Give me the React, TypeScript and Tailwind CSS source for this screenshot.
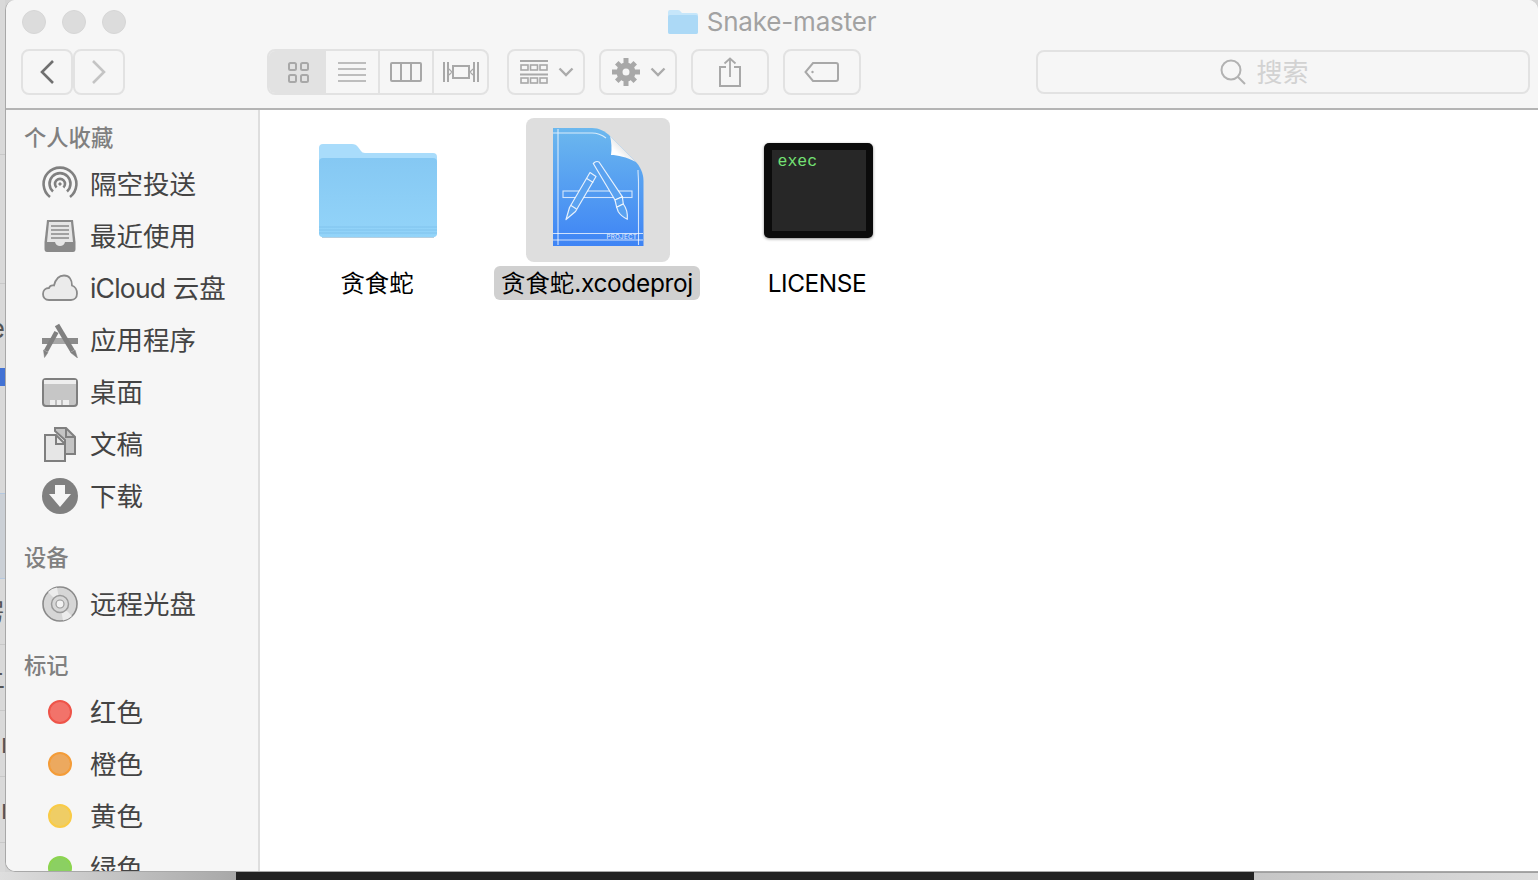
const FONT = "font-['Inter','Noto_Sans_CJK_SC',sans-serif]";

function AirdropIcon() {
  return (
    <svg width="36" height="36" viewBox="0 0 36 36" fill="none" stroke="#808080" strokeWidth="2.6">
      <path d="M8 31 A16.4 16.4 0 1 1 28 31" />
      <path d="M11 25.5 A10.5 10.5 0 1 1 25 25.5" />
      <path d="M14.6 21.5 A5 5 0 1 1 21.4 21.5" />
      <circle cx="18" cy="18" r="1.2" fill="#808080" strokeWidth="1" />
    </svg>
  );
}

function RecentIcon() {
  return (
    <svg width="36" height="36" viewBox="0 0 36 36">
      <path d="M5 2 H31 L33.5 24 V31 Q33.5 34 31 34 H5 Q2.5 34 2.5 31 V24 Z" fill="#8a8a8a" />
      <path d="M7 4 H29 L31 24 H23 Q22 28 18 28 Q14 28 13 24 H5 Z" fill="#e6e6e6" />
      <path d="M9 8 H27 M9 12 H27 M9 16 H27 M9 20 H27" stroke="#8a8a8a" strokeWidth="1.5" />
    </svg>
  );
}

function CloudIcon() {
  return (
    <svg width="36" height="36" viewBox="0 0 36 36">
      <path
        d="M7 30 C3 30 1 27 1 24 C1 20.5 3.5 18 7 18 C8 15.5 10 15 12 15.5 C13.5 9.5 17 5.5 22 5.5 C27.5 5.5 30 10 30 15.5 C33 16.5 35 20 35 23.5 C35 27.5 32.5 30 29 30 Z"
        fill="#ebebeb"
        stroke="#8a8a8a"
        strokeWidth="1.8"
      />
    </svg>
  );
}

function AppsIcon() {
  return (
    <svg width="36" height="36" viewBox="0 0 36 36" fill="none" stroke="#808080">
      <path d="M0 16 H36 V22 H0 Z" fill="#8a8a8a" stroke="none" />
      <path d="M11 16 H25 L27 22 H9 Z" fill="#a8a8a8" stroke="none" />
      <path d="M14.5 10 L4 29" strokeWidth="4.6" />
      <path d="M15 3 L30.5 29" strokeWidth="5" />
      <path d="M1.5 28 L6 30.5 L2.5 35.5 Z" fill="#808080" strokeWidth="0.5" />
      <path d="M28.5 30.5 L33 28 L35.5 36 Z" fill="#808080" strokeWidth="0.5" />
    </svg>
  );
}

function DesktopIcon() {
  return (
    <svg width="36" height="36" viewBox="0 0 36 36">
      <rect x="1" y="5" width="34" height="27" rx="3" fill="#c6c6c6" stroke="#7f7f7f" strokeWidth="2" />
      <rect x="2" y="6" width="32" height="4" fill="#eeeeee" />
      <rect x="8" y="26" width="19" height="5" fill="#eeeeee" />
      <path d="M14 26 V31 M20 26 V31" stroke="#aaaaaa" strokeWidth="1.4" />
    </svg>
  );
}

function DocsIcon() {
  return (
    <svg width="36" height="36" viewBox="0 0 36 36" fill="#e6e6e6" stroke="#7f7f7f" strokeWidth="2">
      <path d="M13 2 H24 L33 11 V28 H23 V14 L13 5 Z" fill="#c4c4c4" />
      <path d="M24 2 V11 H33" fill="none" />
      <path d="M3 9 H14 L23 18 V35 H3 Z" />
      <path d="M14 9 V18 H23" fill="none" />
    </svg>
  );
}

function DownloadIcon() {
  return (
    <svg width="36" height="36" viewBox="0 0 36 36">
      <circle cx="18" cy="18" r="18" fill="#808080" />
      <path d="M13 7 H23 V16 H29 L18 29 L7 16 H13 Z" fill="#f6f6f6" />
    </svg>
  );
}

function DiscIcon() {
  return (
    <svg width="36" height="36" viewBox="0 0 36 36">
      <circle cx="18" cy="18" r="17" fill="#d6d6d6" stroke="#8a8a8a" strokeWidth="1.6" />
      <path d="M18 18 L6 6 A17 17 0 0 1 15 1.5 Z M18 18 L30 30 A17 17 0 0 1 21 34.5 Z" fill="#ececec" />
      <circle cx="18" cy="18" r="8.5" fill="#d8d8d8" stroke="#9a9a9a" strokeWidth="1.5" />
      <circle cx="18" cy="18" r="4" fill="#f2f2f2" stroke="#9a9a9a" strokeWidth="1.2" />
    </svg>
  );
}

function TagDot({ fill, ring }: { fill: string; ring: string }) {
  return (
    <div className={`h-6 w-6 rounded-full border-2 ${fill} ${ring}`} />
  );
}

function BackgroundStrip() {
  return (
    <div className={`${FONT} flex h-full w-[5px] shrink-0 flex-col overflow-hidden bg-[#d9d9d9] text-[26px] leading-none text-[#555]`}>
      <div className="h-[155px] shrink-0 border-b border-[#c8c8c8]" />
      <div className="h-[129px] shrink-0 border-b border-[#c8c8c8]" />
      <div className="flex h-[84px] shrink-0 items-end justify-end overflow-hidden pb-[26px]">
        <span className="shrink-0">e</span>
      </div>
      <div className="h-[18px] shrink-0 bg-[#4272d4]" />
      <div className="h-[108px] shrink-0 border-b border-[#b4c8e0]" />
      <div className="h-[85px] shrink-0 border-b border-[#b4c8e0] bg-[#cbd0d6]" />
      <div className="flex h-[66px] shrink-0 items-center justify-end overflow-hidden border-b border-[#c8c8c8]">
        <span className="shrink-0">房</span>
      </div>
      <div className="flex h-[66px] shrink-0 items-center justify-end overflow-hidden border-b border-[#c8c8c8]">
        <span className="shrink-0">上</span>
      </div>
      <div className="flex h-[66px] shrink-0 items-center overflow-hidden border-b border-[#c8c8c8]">
        <span className="shrink-0 pl-[1px]">r</span>
      </div>
      <div className="flex h-[66px] shrink-0 items-center overflow-hidden border-b border-[#c8c8c8]">
        <span className="shrink-0 pl-[1px]">r</span>
      </div>
    </div>
  );
}

function ToolButton({ children, className }: { children: React.ReactNode; className: string }) {
  return (
    <div className={`flex h-[46px] w-[78px] shrink-0 items-center justify-center rounded-lg border-2 border-[#e2e2e2] ${className}`}>
      {children}
    </div>
  );
}

function Chevron() {
  return (
    <svg width="16" height="10" viewBox="0 0 16 10" fill="none" stroke="#ababab" strokeWidth="2.4">
      <path d="M1.5 1.5 L8 8 L14.5 1.5" />
    </svg>
  );
}

function Toolbar() {
  return (
    <div className="flex h-[46px] items-start pl-[15px]">
      <div className="flex">
        <div className="flex h-[46px] w-[52px] items-center justify-center rounded-lg border-2 border-[#e2e2e2]">
          <svg width="16" height="26" viewBox="0 0 16 26" fill="none" stroke="#707070" strokeWidth="2.6">
            <path d="M14 2 L3 13 L14 24" />
          </svg>
        </div>
        <div className="flex h-[46px] w-[52px] items-center justify-center rounded-lg border-2 border-[#e2e2e2]">
          <svg width="16" height="26" viewBox="0 0 16 26" fill="none" stroke="#c4c4c4" strokeWidth="2.6">
            <path d="M2 2 L13 13 L2 24" />
          </svg>
        </div>
      </div>

      <div className="ml-[142px] flex h-[46px] w-[222px] overflow-hidden rounded-lg border-2 border-[#e2e2e2]">
        <div className="flex w-[57px] items-center justify-center border-r-2 border-[#e2e2e2] bg-[#e2e2e2] pl-[3px]">
          <svg width="21" height="21" viewBox="0 0 21 21" fill="none" stroke="#a8a8a8" strokeWidth="2">
            <rect x="1" y="1" width="7" height="7" rx="1.5" />
            <rect x="13" y="1" width="7" height="7" rx="1.5" />
            <rect x="1" y="13" width="7" height="7" rx="1.5" />
            <rect x="13" y="13" width="7" height="7" rx="1.5" />
          </svg>
        </div>
        <div className="flex w-[54px] items-center justify-center border-r-2 border-[#e2e2e2]">
          <svg width="28" height="20" viewBox="0 0 28 20" stroke="#ababab" strokeWidth="1.6">
            <path d="M0 1 H28 M0 7 H28 M0 13 H28 M0 19 H28" />
          </svg>
        </div>
        <div className="flex w-[54px] items-center justify-center border-r-2 border-[#e2e2e2]">
          <svg width="32" height="20" viewBox="0 0 32 20" fill="none" stroke="#a8a8a8" strokeWidth="2">
            <rect x="1" y="1" width="30" height="18" rx="1" />
            <path d="M11 1 V19 M21 1 V19" />
          </svg>
        </div>
        <div className="flex flex-1 items-center justify-center">
          <svg width="36" height="20" viewBox="0 0 36 20" fill="none" stroke="#a8a8a8" strokeWidth="2">
            <path d="M1 0 V20 M5 0 V20 M31 0 V20 M35 0 V20" />
            <rect x="10" y="4" width="16" height="12" />
            <path d="M6 7 L9 10 L6 13 M30 7 L27 10 L30 13" strokeWidth="1.2" />
          </svg>
        </div>
      </div>

      <ToolButton className="ml-[18px] gap-[10px] pl-[1px]">
        <svg width="28" height="24" viewBox="0 0 28 24" fill="none" stroke="#a8a8a8">
          <path d="M0 1 H28 M0 14.5 H28" strokeWidth="2" />
          <g strokeWidth="1.6">
            <rect x="1" y="5" width="7" height="5" />
            <rect x="10.5" y="5" width="7" height="5" />
            <rect x="20" y="5" width="7" height="5" />
            <rect x="1" y="18" width="7" height="5" />
            <rect x="10.5" y="18" width="7" height="5" />
            <rect x="20" y="18" width="7" height="5" />
          </g>
        </svg>
        <Chevron />
      </ToolButton>

      <ToolButton className="ml-[14px] gap-[10px] pl-[1px]">
        <svg width="28" height="28" viewBox="0 0 28 28">
          <circle cx="14" cy="14" r="6.5" fill="none" stroke="#a8a8a8" strokeWidth="6" />
          <path
            d="M11.5 0 H16.5 V6 H11.5 Z M11.5 22 H16.5 V28 H11.5 Z M0 11.5 H6 V16.5 H0 Z M22 11.5 H28 V16.5 H22 Z M3 6.5 L6.5 3 L10.5 7 L7 10.5 Z M21.5 3 L25 6.5 L21 10.5 L17.5 7 Z M3 21.5 L7 17.5 L10.5 21 L6.5 25 Z M17.5 21 L21 17.5 L25 21.5 L21.5 25 Z"
            fill="#a8a8a8"
          />
        </svg>
        <Chevron />
      </ToolButton>

      <ToolButton className="ml-[14px]">
        <svg width="22" height="30" viewBox="0 0 22 30" fill="none" stroke="#a8a8a8" strokeWidth="2">
          <path d="M7 10 H1 V29 H21 V10 H15" />
          <path d="M11 20 V1.5 M5.5 6.5 L11 1.5 L16.5 6.5" strokeWidth="1.8" />
        </svg>
      </ToolButton>

      <ToolButton className="ml-[14px]">
        <svg width="36" height="22" viewBox="0 0 36 22" fill="none" stroke="#a8a8a8" strokeWidth="2">
          <path d="M9 2 H32 Q34 2 34 4 V18 Q34 20 32 20 H9 L1.5 11 Z" />
          <circle cx="8.5" cy="11" r="1.2" fill="#a8a8a8" strokeWidth="0" />
        </svg>
      </ToolButton>

      <div className="ml-[175px] mt-[1px] flex h-[44px] w-[494px] shrink-0 items-center justify-center gap-[10px] rounded-lg border-2 border-[#e2e2e2] pr-[37px]">
        <svg width="26" height="26" viewBox="0 0 26 26" fill="none" stroke="#b2b2b2" strokeWidth="2">
          <circle cx="11" cy="11" r="9.5" />
          <path d="M18 18 L25 25" />
        </svg>
        <span className="pt-[2px] text-[26px] leading-none text-[#d2d2d2]">搜索</span>
      </div>
    </div>
  );
}

function TitleRow() {
  return (
    <div className="grid h-[49px] grid-cols-[1fr_auto_1fr] items-center pb-[6px]">
      <div className="flex gap-4 pl-[16px]">
        <div className="h-6 w-6 rounded-full border border-[#d6d6d6] bg-[#dcdcdc]" />
        <div className="h-6 w-6 rounded-full border border-[#d6d6d6] bg-[#dcdcdc]" />
        <div className="h-6 w-6 rounded-full border border-[#d6d6d6] bg-[#dcdcdc]" />
      </div>
      <div className="flex items-center gap-[9px]">
        <svg width="30" height="24" viewBox="0 0 30 24">
          <path d="M0 2 Q0 0 2 0 H10 Q12 0 13 2 L14 3 H28 Q30 3 30 5 V22 Q30 24 28 24 H2 Q0 24 0 22 Z" fill="#c6e6fa" />
          <path d="M0 7 Q0 5 2 5 H28 Q30 5 30 7 V22 Q30 24 28 24 H2 Q0 24 0 22 Z" fill="#acd9f6" />
        </svg>
        <span className="pt-[1px] text-[26px] leading-none tracking-[-0.17px] text-[#a2a2a2]">Snake-master</span>
      </div>
      <div />
    </div>
  );
}

function SectionLabel({ children }: { children: React.ReactNode }) {
  return (
    <div className="flex h-10 items-center pl-[18px] text-[22.3px] font-medium text-[#808080]">
      {children}
    </div>
  );
}

function SidebarItem({ icon, label }: { icon: React.ReactNode; label: React.ReactNode }) {
  return (
    <div className="flex h-[52px] shrink-0 items-center pl-[36px]">
      <div className="flex w-[36px] justify-center">{icon}</div>
      <span className="ml-3 text-[26.5px] leading-none text-[#444444]">{label}</span>
    </div>
  );
}

function Sidebar() {
  return (
    <div className="h-full w-[254px] shrink-0 overflow-hidden border-r-2 border-[#dedede] bg-[#f6f6f6] pt-2">
      <SectionLabel>个人收藏</SectionLabel>
      <SidebarItem icon={<AirdropIcon />} label="隔空投送" />
      <SidebarItem icon={<RecentIcon />} label="最近使用" />
      <SidebarItem
        icon={<CloudIcon />}
        label={
          <>
            <span className="tracking-[-0.8px]">iCloud</span> 云盘
          </>
        }
      />
      <SidebarItem icon={<AppsIcon />} label="应用程序" />
      <SidebarItem icon={<DesktopIcon />} label="桌面" />
      <SidebarItem icon={<DocsIcon />} label="文稿" />
      <SidebarItem icon={<DownloadIcon />} label="下载" />
      <div className="mt-4">
        <SectionLabel>设备</SectionLabel>
        <SidebarItem icon={<DiscIcon />} label="远程光盘" />
      </div>
      <div className="mt-4">
        <SectionLabel>标记</SectionLabel>
        <SidebarItem icon={<TagDot fill="bg-[#f2736a]" ring="border-[#ee5449]" />} label="红色" />
        <SidebarItem icon={<TagDot fill="bg-[#eca95f]" ring="border-[#f49c38]" />} label="橙色" />
        <SidebarItem icon={<TagDot fill="bg-[#efcd65]" ring="border-[#f9cb47]" />} label="黄色" />
        <SidebarItem icon={<TagDot fill="bg-[#8bd062]" ring="border-[#8cd450]" />} label="绿色" />
      </div>
    </div>
  );
}

function FolderIcon() {
  return (
    <svg width="144" height="144" viewBox="0 0 144 144">
      <defs>
        <linearGradient id="folderFront" x1="0" y1="0" x2="0" y2="1">
          <stop offset="0" stopColor="#85c8f3" />
          <stop offset="1" stopColor="#93d4f9" />
        </linearGradient>
      </defs>
      <path
        d="M13 30 Q13 26 17 26 H46 Q50 26 52 29 L55 33 Q56 35 59 35 H127 Q131 35 131 39 V115 Q131 119 127 119 H17 Q13 119 13 115 Z"
        fill="#a9dcfb"
      />
      <path d="M13 44 Q13 40 17 40 H127 Q131 40 131 44 V115 Q131 119 127 119 H17 Q13 119 13 115 Z" fill="url(#folderFront)" />
      <path d="M13 109 H131 M13 112 H131 M13 115 H131" stroke="#80c3ed" strokeWidth="1" />
      <path d="M16 119.5 H128" stroke="#b5cfe0" strokeWidth="1" />
    </svg>
  );
}

function ProjectIcon() {
  return (
    <svg width="144" height="144" viewBox="0 0 144 144">
      <defs>
        <linearGradient id="docBlue" x1="0" y1="0" x2="0" y2="1">
          <stop offset="0" stopColor="#6cb8ee" />
          <stop offset="1" stopColor="#3e84f5" />
        </linearGradient>
        <linearGradient id="docFold" x1="0" y1="1" x2="1" y2="0">
          <stop offset="0.3" stopColor="#ffffff" />
          <stop offset="1" stopColor="#bdbdbd" />
        </linearGradient>
      </defs>
      <path
        d="M27 10 H66 C73 10 79 13 84 18 L109 43 C114 48 117.5 55 117.5 63 V128 H27 Z"
        fill="url(#docBlue)"
      />
      <g fill="none" stroke="#ffffff" strokeOpacity="0.75" strokeWidth="1.1">
        <path d="M32 11 V127 M27 15 H66 C72 15 76 17 80 20 M112 52 C112 56 112.5 60 112.5 64 V127" />
        <path d="M27 115.5 H117 M27 122 H117" />
        <rect x="37" y="73" width="69" height="6.5" />
      </g>
      <g fill="#5aa2f0" stroke="#ffffff" strokeOpacity="0.85" strokeWidth="1.2" strokeLinejoin="round">
        <path d="M64 54.5 L70 58.5 L49.5 93.5 L40 101.5 L43.5 89.5 Z" />
        <path d="M60.7 60.5 L67.3 64.5 M45 87.5 L50.5 91" fill="none" />
        <path d="M67.3 45.5 Q70 42.5 73 44 L96.3 78.7 L89 82 Z" />
        <path d="M89 82 L96.3 78.7 L97.3 86 L90.7 89.3 Z" />
        <path d="M90.7 89.3 L97.3 86 Q102 92 101.3 101.3 Q95 98 92.3 93.7 Z" />
      </g>
      <path d="M84 18 L110 44 C100 39 92 37 85 37 C86 30 85.5 24 84 18 Z" fill="url(#docFold)" />
      <text x="80.5" y="120.5" fontSize="6.2" fontWeight="500" letterSpacing="0.3" fill="#ffffff" fillOpacity="0.8">PROJECT</text>
    </svg>
  );
}

function ExecIcon() {
  return (
    <div className="flex h-[144px] w-[144px] items-center justify-center">
      <div className="h-[95px] w-[109px] rounded-[5px] bg-[#0b0b0b] px-2 pt-[7px] shadow-[0_1px_3px_rgba(0,0,0,0.45)]">
        <div className="h-[81px] w-[94px] bg-[#272727] pl-[6px] font-['Liberation_Mono',monospace] text-[16.5px] leading-[24px] text-[#74e074]">
          exec
        </div>
      </div>
    </div>
  );
}

function FileCell({ icon, label, selected }: { icon: React.ReactNode; label: React.ReactNode; selected?: boolean }) {
  return (
    <div className="flex w-[220px] shrink-0 flex-col items-center">
      <div className={`h-[144px] w-[144px] rounded-lg ${selected ? "bg-[#dedede]" : ""}`}>{icon}</div>
      <div
        className={`mr-[2px] mt-1 flex h-[34px] items-center rounded-md px-[7px] text-[24.4px] leading-none text-black ${selected ? "bg-[#d0d0d0]" : ""}`}
      >
        {label}
      </div>
    </div>
  );
}

export default function App() {
  return (
    <div className={`${FONT} flex h-[880px] w-[1538px] flex-col overflow-hidden bg-[#d4d4d4]`}>
      <div className="flex h-[872px] shrink-0">
        <BackgroundStrip />
        <div className="flex min-w-0 flex-1 flex-col overflow-hidden rounded-t-[10px] rounded-bl-[10px] border-b border-l border-[#a8a8a8] bg-white">
          <div className="h-[110px] shrink-0 border-b-2 border-[#b4b4b4] bg-[#f6f6f6]">
            <TitleRow />
            <Toolbar />
          </div>
          <div className="flex min-h-0 flex-1">
            <Sidebar />
            <div className="flex flex-1 items-start bg-white pl-2 pt-2">
              <FileCell icon={<FolderIcon />} label="贪食蛇" />
              <FileCell
                icon={<ProjectIcon />}
                label={
                  <>
                    贪食蛇<span className="tracking-[-0.3px]">.xcodeproj</span>
                  </>
                }
                selected
              />
              <FileCell icon={<ExecIcon />} label={<span className="tracking-[-0.4px]">LICENSE</span>} />
            </div>
          </div>
        </div>
      </div>
      <div className="flex h-2 shrink-0">
        <div className="h-full w-[236px] shrink-0 bg-gradient-to-r from-[#dedede] to-[#a8a8a8]" />
        <div className="h-full w-[1018px] shrink-0 bg-[#222222]" />
        <div className="h-full flex-1 border-t border-[#a0a0a0] bg-gradient-to-r from-[#c6c6c6] to-[#dcdcdc]" />
      </div>
    </div>
  );
}
